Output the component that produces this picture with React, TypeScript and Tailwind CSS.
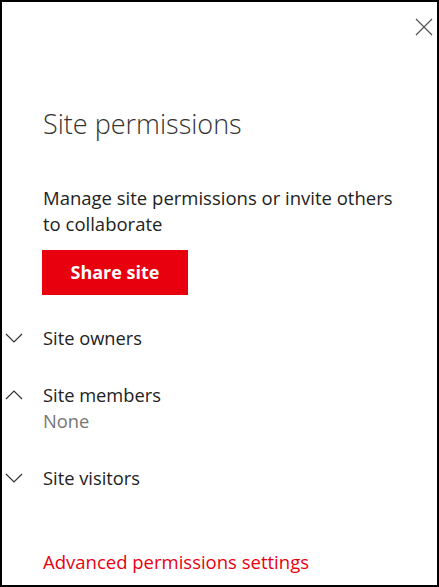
import React from 'react';

const Chevron: React.FC<{ up?: boolean }> = ({ up }) => (
  <svg width="18" height="10" viewBox="0 0 18 10" className="shrink-0" fill="none" stroke="#333" strokeWidth="1.2">
    {up ? <path d="M1 9 L9 1 L17 9" /> : <path d="M1 1 L9 9 L17 1" />}
  </svg>
);

const Section: React.FC<{ title: string; up?: boolean; sub?: string }> = ({ title, up, sub }) => (
  <div className="flex flex-col">
    <div className="flex items-center h-[26px]">
      <div className="w-[41px] pl-[3px] flex items-center">
        <Chevron up={up} />
      </div>
      <span className="text-[18.3px] text-[#222]">{title}</span>
    </div>
    {sub && <div className="pl-[41px] text-[18.3px] text-[#767676] leading-[26px]">{sub}</div>}
  </div>
);

export default function App() {
  return (
    <div
      className="w-[439px] h-[587px] border-2 border-black bg-white flex flex-col relative"
      style={{ fontFamily: '"Open Sans", "Noto Sans", sans-serif' }}
    >
      <button className="absolute right-[4px] top-[16px] w-[18px] h-[18px]" aria-label="Close">
        <svg width="18" height="18" viewBox="0 0 18 18" stroke="#555" strokeWidth="1.2">
          <path d="M1 1 L17 17 M17 1 L1 17" />
        </svg>
      </button>

      <h1 className="mt-[102px] pl-[41px] text-[27px] font-light text-[#333] leading-[40px]">Site permissions</h1>

      <p className="mt-[41px] ml-[41px] w-[370px] text-[18.5px] leading-[26px] text-[#222]">
        Manage site permissions or invite others to collaborate
      </p>

      <div className="pl-[40px] mt-[13px]">
        <button className="w-[146px] h-[45px] bg-[#e8000f] text-white text-[18px] font-bold">Share site</button>
      </div>

      <div className="mt-[30px] flex flex-col gap-[31px]">
        <Section title="Site owners" />
        <Section title="Site members" up sub="None" />
        <Section title="Site visitors" />
      </div>

      <a className="mt-auto mb-[10px] pl-[41px] text-[18.5px] text-[#e8000f] leading-[26px]">Advanced permissions settings</a>
    </div>
  );
}
